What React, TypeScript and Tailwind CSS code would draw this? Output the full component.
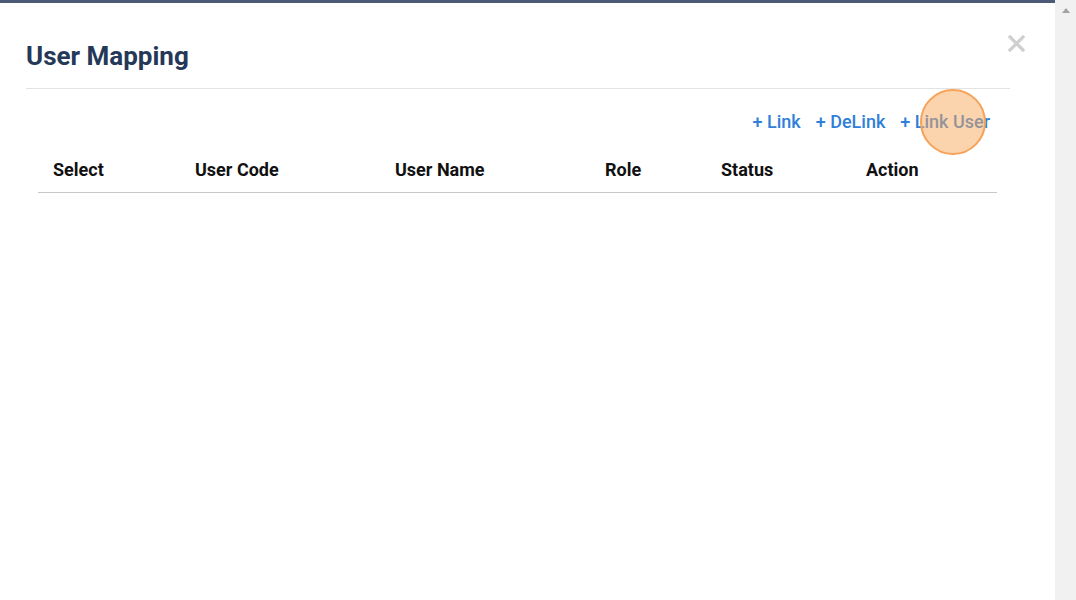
export default function App() {
  const columns = ['Select', 'User Code', 'User Name', 'Role', 'Status', 'Action']

  return (
    <div className="flex h-[600px] w-full bg-white font-['Roboto',sans-serif]">
      <div className="relative flex-1 border-t-[3px] border-[#4b5a77] pl-[26px] pr-[45px] pt-[37px]">
        <button className="absolute right-[30px] top-[32px] leading-none">
          <svg width="17" height="17" viewBox="0 0 17 17">
            <path d="M2 2 L15 15 M15 2 L2 15" stroke="#cfcfcf" strokeWidth="3.2" strokeLinecap="square" />
          </svg>
        </button>

        <h2 className="border-b border-[#e3e3e3] pb-[16px] text-[26px] font-bold leading-[32px] text-[#253858]">
          User Mapping
        </h2>

        <div className="mt-[21px] flex justify-end gap-[15px] pr-[20px] text-[18px] font-medium leading-[24px] text-[#2f80d8]">
          <span>+ Link</span>
          <span>+ DeLink</span>
          <span className="relative">
            + Link User
            <span className="absolute left-[20px] top-[-21px] h-[66px] w-[66px] rounded-full border-2 border-[#f5a35a] bg-[#f8a75c]/50" />
          </span>
        </div>

        <div className="ml-[12px] mr-[13px] mt-[12px]">
          <div className="grid grid-cols-[142px_200px_210px_116px_145px_1fr] border-b border-[#c8c8c8] text-[18px] font-bold leading-[22px] text-[#111]">
            {columns.map((c) => (
              <div key={c} className="px-[15px] pb-[11px] pt-[13px]">
                {c}
              </div>
            ))}
          </div>
        </div>
      </div>

      <div className="flex w-[21px] justify-center bg-[#f1f1f1] pt-[8px]">
        <svg width="8" height="5" viewBox="0 0 8 5">
          <path d="M0 5 L4 0 L8 5 Z" fill="#a3a3a3" />
        </svg>
      </div>
    </div>
  )
}
